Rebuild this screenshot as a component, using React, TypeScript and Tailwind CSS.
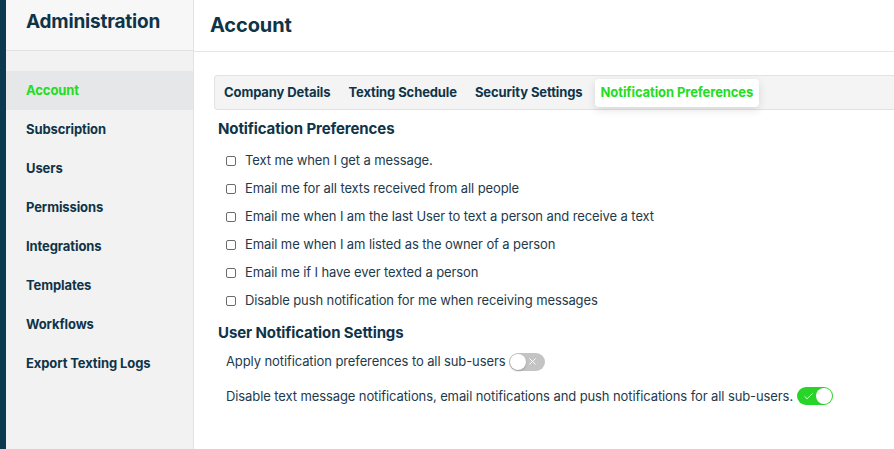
import { Check, X } from "lucide-react";

const navItems = [
  "Account",
  "Subscription",
  "Users",
  "Permissions",
  "Integrations",
  "Templates",
  "Workflows",
  "Export Texting Logs",
];

const tabs = ["Company Details", "Texting Schedule", "Security Settings", "Notification Preferences"];

const prefs = [
  "Text me when I get a message.",
  "Email me for all texts received from all people",
  "Email me when I am the last User to text a person and receive a text",
  "Email me when I am listed as the owner of a person",
  "Email me if I have ever texted a person",
  "Disable push notification for me when receiving messages",
];

function Toggle({ on }: { on: boolean }) {
  return (
    <span
      className={
        "relative inline-flex items-center w-[36px] h-[18px] rounded-full shrink-0 " +
        (on ? "bg-[#28d428]" : "bg-[#c4c4c4]")
      }
    >
      {on ? (
        <>
          <Check className="absolute left-[6px] w-[11px] h-[11px] text-white" strokeWidth={2} />
          <span className="absolute right-[1px] w-[16px] h-[16px] rounded-full bg-white" />
        </>
      ) : (
        <>
          <span className="absolute left-[1px] w-[16px] h-[16px] rounded-full bg-white shadow-[0_1px_2px_rgba(0,0,0,0.25)]" />
          <X className="absolute right-[7px] w-[11px] h-[11px] text-white" strokeWidth={2} />
        </>
      )}
    </span>
  );
}

export default function App() {
  return (
    <div className="flex w-[894px] h-[449px] overflow-hidden bg-white font-['Inter','Liberation_Sans',sans-serif] tracking-[-0.1px] text-[#0f3448]">
      {/* dark stripe */}
      <div className="w-[6px] bg-[#0b3a4e] shrink-0" />

      {/* sidebar */}
      <aside className="w-[188px] shrink-0 flex flex-col bg-[#f2f2f2] border-r border-[#e3e3e3]">
        <div className="h-[51px] shrink-0 flex items-center px-[20px] bg-[#f7f7f8] border-b border-[#e2e2e2]">
          <h1 className="text-[19px] font-bold tracking-[-0.2px] -mt-[5px]">Administration</h1>
        </div>
        <nav className="flex flex-col pt-[20px]">
          {navItems.map((item, i) => (
            <div
              key={item}
              className={
                "h-[39px] flex items-center px-[20px] text-[13px] font-bold " +
                (i === 0 ? "bg-[#e5e7e8] text-[#22dd22]" : "")
              }
            >
              {item}
            </div>
          ))}
        </nav>
      </aside>

      {/* main */}
      <main className="flex-1 flex flex-col min-w-0">
        <div className="h-[52px] shrink-0 flex items-center px-[16px] border-b border-[#e6e6e6]">
          <h2 className="text-[20px] font-bold -mt-[2px]">Account</h2>
        </div>

        <div className="pl-[20px] pt-[23px]">
          <div className="flex items-center h-[35px] pl-[3px] bg-[#f4f4f4] border border-[#e2e2e2] border-r-0 rounded-l-[4px]">
            {tabs.map((t, i) =>
              i === 3 ? (
                <div
                  key={t}
                  className="h-[28px] flex items-center px-[6px] bg-white rounded-[4px] shadow-[0_3px_8px_rgba(0,0,0,0.12)] text-[13px] font-bold text-[#22dd22]"
                >
                  {t}
                </div>
              ) : (
                <div key={t} className="px-[6px] mr-[6px] text-[13px] font-bold">
                  {t}
                </div>
              )
            )}
          </div>

          <h3 className="mt-[8px] ml-[4px] text-[15px] font-bold">Notification Preferences</h3>

          <div className="mt-[6px] ml-[12px] flex flex-col">
            {prefs.map((p) => (
              <label key={p} className="h-[28px] flex items-center gap-[9px] text-[13px] text-[#1e3a4c]">
                <span className="w-[10px] h-[10px] border border-[#6b6b6b] rounded-[2px] bg-white shrink-0" />
                {p}
              </label>
            ))}
          </div>

          <h3 className="mt-[7px] ml-[4px] text-[15px] font-bold">User Notification Settings</h3>

          <div className="mt-[8px] ml-[12px] flex flex-col gap-[15px] text-[13px] text-[#1e3a4c]">
            <div className="flex items-center gap-[4px]">
              <span>Apply notification preferences to all sub-users</span>
              <Toggle on={false} />
            </div>
            <div className="flex items-center gap-[4px]">
              <span>Disable text message notifications, email notifications and push notifications for all sub-users.</span>
              <Toggle on />
            </div>
          </div>
        </div>
      </main>
    </div>
  );
}
